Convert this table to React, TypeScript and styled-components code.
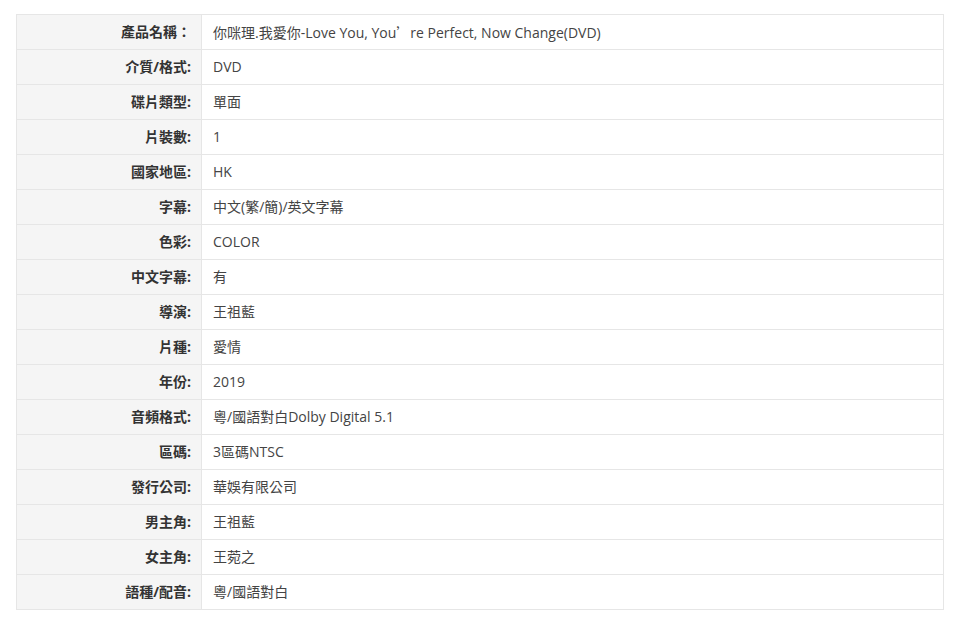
import React from "react";
import styled, { createGlobalStyle } from "styled-components";

const Global = createGlobalStyle`
  html, body { margin: 0; padding: 0; background: #fff; }
  body { font-family: "Open Sans", "Noto Sans CJK TC", sans-serif; }
`;

const Page = styled.div`
  padding: 14px 0 0 16px;
`;

const Table = styled.table`
  width: 928px;
  border-collapse: collapse;
  table-layout: fixed;
  border: 1px solid #e6e6e6;
`;

const Row = styled.tr`
  height: 35px;
`;

const Label = styled.th`
  width: 185px;
  box-sizing: border-box;
  background: #f5f5f5;
  border: 1px solid #e6e6e6;
  text-align: right;
  padding: 0 10px 0 0;
  font-size: 14px;
  line-height: 20px;
  font-weight: 700;
  color: #333;
  height: 34px;
  white-space: nowrap;
`;

const Value = styled.td`
  border: 1px solid #e6e6e6;
  padding: 0 0 0 11px;
  font-size: 14px;
  line-height: 20px;
  font-weight: 400;
  color: #444;
  height: 34px;
  white-space: nowrap;
`;

const WideQuote = styled.span`
  font-family: "Noto Sans CJK TC", sans-serif;
  display: inline-block;
  width: 14px;
`;

const rows: [string, React.ReactNode][] = [
  [
    "產品名稱：",
    <>
      你咪理.我愛你-Love You, You<WideQuote>’</WideQuote>re Perfect, Now Change(DVD)
    </>,
  ],
  ["介質/格式:", "DVD"],
  ["碟片類型:", "單面"],
  ["片裝數:", "1"],
  ["國家地區:", "HK"],
  ["字幕:", "中文(繁/簡)/英文字幕"],
  ["色彩:", "COLOR"],
  ["中文字幕:", "有"],
  ["導演:", "王祖藍"],
  ["片種:", "愛情"],
  ["年份:", "2019"],
  ["音頻格式:", "粵/國語對白Dolby Digital 5.1"],
  ["區碼:", "3區碼NTSC"],
  ["發行公司:", "華娛有限公司"],
  ["男主角:", "王祖藍"],
  ["女主角:", "王菀之"],
  ["語種/配音:", "粵/國語對白"],
];

export default function App() {
  return (
    <Page>
      <Global />
      <Table>
        <tbody>
          {rows.map(([k, v]) => (
            <Row key={k}>
              <Label>{k}</Label>
              <Value>{v}</Value>
            </Row>
          ))}
        </tbody>
      </Table>
    </Page>
  );
}
